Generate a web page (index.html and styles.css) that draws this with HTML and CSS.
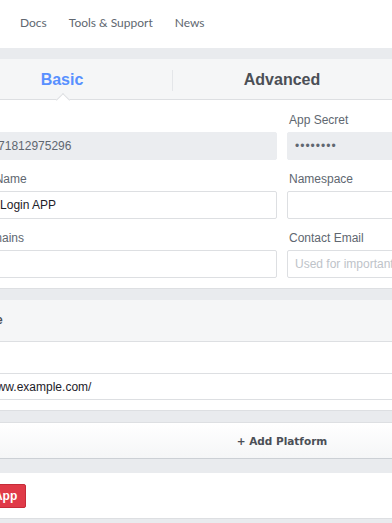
FILE: index.html
```html
<!DOCTYPE html>
<html lang="en">

<head>
  <meta charset="UTF-8">
  <meta name="viewport" content="width=device-width, initial-scale=1.0">
  <title>App Settings</title>
  <link rel="stylesheet" href="styles.css">
</head>

<body>
  <!-- Top navigation -->
  <div class="topNav">
    <a href="#">Docs</a>
    <a href="#">Tools &amp; Support</a>
    <a href="#">News</a>
  </div>

  <div class="main">
    <!-- Settings card with tabs and basic fields -->
    <div class="card">
      <div class="tabs">
        <div class="tab active">Basic</div>
        <div class="tab">Advanced</div>
        <div class="tab">Roles</div>
      </div>

      <form class="settingsForm">
        <div class="field">
          <label for="appId">App ID</label>
          <input type="text" id="appId" value="10583671812975296" disabled>
        </div>
        <div class="field">
          <label for="appSecret">App Secret</label>
          <input type="text" id="appSecret" class="secret" value="••••••••" disabled>
        </div>
        <div class="field">
          <label for="displayName">Display Name</label>
          <input type="text" id="displayName" value="Google Login APP">
        </div>
        <div class="field">
          <label for="namespace">Namespace</label>
          <input type="text" id="namespace">
        </div>
        <div class="field">
          <label for="appDomains">App Domains</label>
          <input type="text" id="appDomains">
        </div>
        <div class="field">
          <label for="contactEmail">Contact Email</label>
          <input type="text" id="contactEmail" placeholder="Used for important communication about your app">
        </div>
      </form>
    </div>

    <!-- Website platform -->
    <div class="card">
      <div class="cardHeader">Website</div>
      <div class="cardBody">
        <input type="text" id="siteUrl" class="wideInput" value="http://www.example.com/">
      </div>
    </div>

    <!-- Add platform -->
    <div class="addPlatform">+ Add Platform</div>

    <!-- Delete app -->
    <div class="card dangerCard">
      <button class="deleteButton">Delete App</button>
    </div>
  </div>
</body>

</html>
```

FILE: styles.css
```css
/* Page base */
body {
  margin: 0;
  background-color: #e9ebee;
  font-family: 'Liberation Sans', Arial, sans-serif;
  font-size: 12px;
  color: #1d2129;
  overflow: hidden;
}

/* Top navigation */
.topNav {
  height: 48px;
  background-color: #fff;
  display: flex;
  align-items: center;
  gap: 22px;
  padding-left: 20px;
  box-sizing: border-box;
}

.topNav a {
  font-family: Lato, sans-serif;
  font-size: 12px;
  color: #606770;
  text-decoration: none;
  position: relative;
  top: -2px;
}

/* Content column, wider than the window */
.main {
  width: 684px;
  margin-left: -60px;
  padding-top: 11px;
}

.card {
  background-color: #fff;
  border-bottom: 1px solid #dddfe2;
  margin-bottom: 11px;
}

/* Tabs */
.tabs {
  display: flex;
  height: 41px;
  padding: 0 12px;
  background-color: #f5f6f7;
  border-bottom: 1px solid #dddfe2;
  box-sizing: border-box;
}

.tab {
  flex: 1;
  display: flex;
  align-items: center;
  justify-content: center;
  padding-top: 2px;
  font-size: 16px;
  font-weight: bold;
  color: #4b4f56;
  position: relative;
}

.tab + .tab::before {
  content: '';
  position: absolute;
  left: 0;
  top: 11px;
  height: 21px;
  border-left: 1px solid #e4e6e9;
}

.tab.active {
  color: #5890ff;
}

/* Little pointer under the active tab */
.tab.active::after {
  content: '';
  position: absolute;
  left: 50%;
  bottom: -1px;
  width: 9px;
  height: 9px;
  margin-left: -4px;
  background-color: #fff;
  border-top: 1px solid #dddfe2;
  border-left: 1px solid #dddfe2;
  transform: translateY(50%) rotate(45deg);
}

/* Two-column form */
.settingsForm {
  display: grid;
  grid-template-columns: 1fr 1fr;
  column-gap: 10px;
  row-gap: 11px;
  padding: 12px 10px 10px 10px;
}

.field label {
  display: block;
  line-height: 16px;
  margin-bottom: 4px;
  padding-left: 2px;
  color: #606770;
}

input[type="text"] {
  width: 100%;
  height: 28px;
  box-sizing: border-box;
  padding: 0 7px;
  border: 1px solid #dddfe2;
  border-radius: 2px;
  font-family: 'Liberation Sans', Arial, sans-serif;
  font-size: 12px;
  color: #1d2129;
  background-color: #fff;
}

input[type="text"]:disabled {
  background-color: #ebedf0;
  border-color: #ebedf0;
  color: #606770;
}

input.secret {
  color: #4b4f56;
  letter-spacing: 1px;
}

input::placeholder {
  color: #bec3c9;
}

/* Website platform */
.cardHeader {
  height: 42px;
  line-height: 41px;
  padding-left: 17px;
  background-color: #f5f6f7;
  border-bottom: 1px solid #dddfe2;
  box-sizing: border-box;
  font-size: 12px;
  font-weight: bold;
  color: #4b4f56;
}

.cardBody {
  padding: 31px 10px 10px 10px;
}

input.wideInput {
  height: 27px;
  border-radius: 0;
}

/* Add platform bar */
.addPlatform {
  height: 37px;
  line-height: 36px;
  text-align: center;
  background: linear-gradient(#fff, #f5f6f7);
  border-top: 1px solid #dddfe2;
  border-bottom: 1px solid #ccd0d5;
  box-sizing: border-box;
  font-family: 'DejaVu Sans', sans-serif;
  font-size: 10.5px;
  font-weight: bold;
  color: #4b4f56;
  margin-bottom: 14px;
}

/* Delete button */
.dangerCard {
  padding: 11px 0 10px 0;
}

.deleteButton {
  display: block;
  margin-left: 6px;
  height: 24px;
  padding: 0 8px;
  background-color: #e03a48;
  border: 1px solid #c52c39;
  border-radius: 2px;
  color: #fff;
  font-family: 'Liberation Sans', Arial, sans-serif;
  font-size: 12px;
  font-weight: bold;
}
```
